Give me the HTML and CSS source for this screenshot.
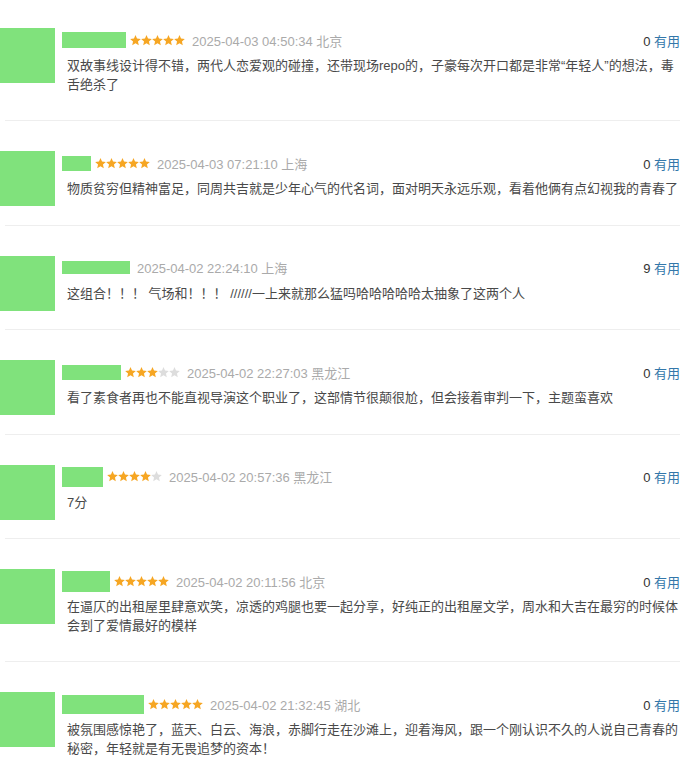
FILE: index.html
```html
<!DOCTYPE html>
<html lang="zh-CN">
<head>
    <meta charset="UTF-8">
    <title>短评</title>
    <link rel="stylesheet" href="styles.css">
</head>
<body>
    <div class="comments">

        <div class="comment">
            <div class="avatar"></div>
            <div class="body">
                <div class="info">
                    <span class="name" style="width:64px;height:16px"></span>
                    <span class="stars s5"></span>
                    <span class="time">2025-04-03 04:50:34 北京</span>
                    <span class="votes">0 <a href="#">有用</a></span>
                </div>
                <p class="text">双故事线设计得不错，两代人恋爱观的碰撞，还带现场repo的，子豪每次开口都是非常“年轻人”的想法，毒舌绝杀了</p>
            </div>
        </div>

        <div class="comment">
            <div class="avatar"></div>
            <div class="body">
                <div class="info">
                    <span class="name" style="width:29px;height:15px"></span>
                    <span class="stars s5"></span>
                    <span class="time">2025-04-03 07:21:10 上海</span>
                    <span class="votes">0 <a href="#">有用</a></span>
                </div>
                <p class="text">物质贫穷但精神富足，同周共吉就是少年心气的代名词，面对明天永远乐观，看着他俩有点幻视我的青春了</p>
            </div>
        </div>

        <div class="comment">
            <div class="avatar"></div>
            <div class="body">
                <div class="info">
                    <span class="name" style="width:68px;height:13px"></span>
                    <span class="time">2025-04-02 22:24:10 上海</span>
                    <span class="votes">9 <a href="#">有用</a></span>
                </div>
                <p class="text">这组合！！！ 气场和！！！ //////一上来就那么猛吗哈哈哈哈哈太抽象了这两个人</p>
            </div>
        </div>

        <div class="comment">
            <div class="avatar"></div>
            <div class="body">
                <div class="info">
                    <span class="name" style="width:59px;height:15px"></span>
                    <span class="stars s3"></span>
                    <span class="time">2025-04-02 22:27:03 黑龙江</span>
                    <span class="votes">0 <a href="#">有用</a></span>
                </div>
                <p class="text">看了素食者再也不能直视导演这个职业了，这部情节很颠很尬，但会接着审判一下，主题蛮喜欢</p>
            </div>
        </div>

        <div class="comment">
            <div class="avatar"></div>
            <div class="body">
                <div class="info">
                    <span class="name" style="width:41px;height:20px"></span>
                    <span class="stars s4"></span>
                    <span class="time">2025-04-02 20:57:36 黑龙江</span>
                    <span class="votes">0 <a href="#">有用</a></span>
                </div>
                <p class="text">7分</p>
            </div>
        </div>

        <div class="comment">
            <div class="avatar"></div>
            <div class="body">
                <div class="info">
                    <span class="name" style="width:48px;height:21px"></span>
                    <span class="stars s5"></span>
                    <span class="time">2025-04-02 20:11:56 北京</span>
                    <span class="votes">0 <a href="#">有用</a></span>
                </div>
                <p class="text">在逼仄的出租屋里肆意欢笑，凉透的鸡腿也要一起分享，好纯正的出租屋文学，周水和大吉在最穷的时候体会到了爱情最好的模样</p>
            </div>
        </div>

        <div class="comment">
            <div class="avatar"></div>
            <div class="body">
                <div class="info">
                    <span class="name" style="width:82px;height:19px"></span>
                    <span class="stars s5"></span>
                    <span class="time">2025-04-02 21:32:45 湖北</span>
                    <span class="votes">0 <a href="#">有用</a></span>
                </div>
                <p class="text">被氛围感惊艳了，蓝天、白云、海浪，赤脚行走在沙滩上，迎着海风，跟一个刚认识不久的人说自己青春的秘密，年轻就是有无畏追梦的资本！</p>
            </div>
        </div>

    </div>

    <svg width="0" height="0" style="position:absolute">
        <defs>
            <polygon id="star" points="5.5,0.1 7.03,3.6 10.83,3.97 7.97,6.5 8.79,10.23 5.5,8.3 2.21,10.23 3.03,6.5 0.17,3.97 3.97,3.6"/>
        </defs>
    </svg>
    <script>
        // 根据评分画出星星
        document.querySelectorAll('.stars').forEach((el) => {
            const n = parseInt(el.className.replace(/\D/g, ''));
            let html = '<svg width="55" height="11" viewBox="0 0 55 11">';
            for (let i = 0; i < 5; i++) {
                const color = i < n ? '#f6a623' : '#ddd';
                html += `<use href="#star" x="${i * 11}" fill="${color}"/>`;
            }
            el.innerHTML = html + '</svg>';
        });
    </script>
</body>
</html>
```

FILE: styles.css
```css
body {
    margin: 0;
    padding: 0 12px 0 0;
    background: #fff;
    font-family: Arial, "Liberation Sans", "Noto Sans CJK SC", sans-serif;
    color: #494949;
}
.comment {
    padding-top: 30px;
}
.comment:first-child {
    padding-top: 28px;
}
/* 分隔线 */
.comment::after {
    content: "";
    display: block;
    clear: both;
    height: 1px;
    margin: 26px 0 0 5px;
    background: #eee;
}
.avatar {
    float: left;
    width: 55px;
    height: 55px;
    background: #80e27c;
}
.body {
    margin-left: 62px;
}
.info {
    display: flex;
    align-items: center;
    height: 20px;
    margin-top: 2px;
}
.name {
    display: inline-block;
    background: #80e27c;
}
.stars {
    display: inline-flex;
    margin-left: 4px;
}
.stars svg {
    display: block;
}
.time {
    margin-left: 7px;
    font-size: 13px;
    color: #aaa;
}
.votes {
    margin-left: auto;
    font-size: 13px;
    color: #333;
}
.votes a {
    color: #37a;
    text-decoration: none;
}
.text {
    margin: 7px 0 0;
    padding-left: 5px;
    font-size: 13px;
    line-height: 18.5px;
    color: #494949;
}
```
